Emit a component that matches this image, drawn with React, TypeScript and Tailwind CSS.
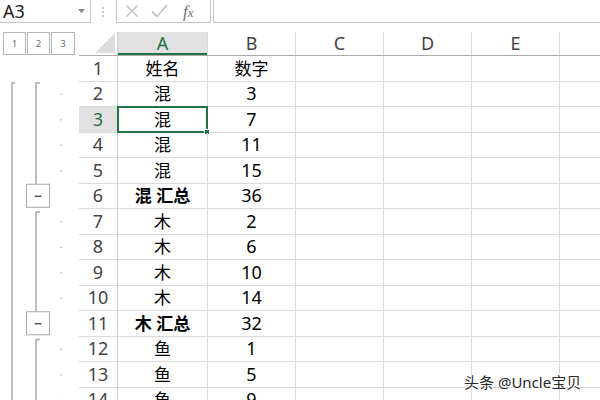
import React from "react";

type Row = { n: number; a: string; b: string; bold?: boolean; level?: "detail" | "total" | "head" };

const rows: Row[] = [
  { n: 1, a: "姓名", b: "数字", level: "head" },
  { n: 2, a: "混", b: "3", level: "detail" },
  { n: 3, a: "混", b: "7", level: "detail" },
  { n: 4, a: "混", b: "11", level: "detail" },
  { n: 5, a: "混", b: "15", level: "detail" },
  { n: 6, a: "混 汇总", b: "36", bold: true, level: "total" },
  { n: 7, a: "木", b: "2", level: "detail" },
  { n: 8, a: "木", b: "6", level: "detail" },
  { n: 9, a: "木", b: "10", level: "detail" },
  { n: 10, a: "木", b: "14", level: "detail" },
  { n: 11, a: "木 汇总", b: "32", bold: true, level: "total" },
  { n: 12, a: "鱼", b: "1", level: "detail" },
  { n: 13, a: "鱼", b: "5", level: "detail" },
  { n: 14, a: "鱼", b: "9", level: "detail" },
];

const RH = 25.5;
const cjk = { fontFamily: '"Noto Sans", "Noto Sans CJK SC", sans-serif' };

function OutlineGutter() {
  const stroke = "#a8a8a8";
  const center = (n: number) => (n - 1) * RH + RH / 2;
  const top = (n: number) => (n - 1) * RH;
  return (
    <svg width="79" height="350" className="block">
      {/* level 1 bracket */}
      <path d={`M15 ${top(2) + 1.5} H12 V350`} stroke={stroke} strokeWidth="1.5" fill="none" />
      {/* level 2 brackets */}
      <path d={`M40 ${top(2) + 1.5} H36 V${center(6) - 12}`} stroke={stroke} strokeWidth="1.5" fill="none" />
      <path d={`M40 ${top(7) + 3} H36 V${center(11) - 12}`} stroke={stroke} strokeWidth="1.5" fill="none" />
      <path d={`M40 ${top(12) + 3} H36 V350`} stroke={stroke} strokeWidth="1.5" fill="none" />
      {[6, 11].map((n) => (
        <g key={n}>
          <rect x="26.5" y={center(n) - 12} width="23" height="23" fill="#fff" stroke="#a8a8a8" />
          <line x1="34.5" x2="41.5" y1={center(n)} y2={center(n)} stroke="#333" strokeWidth="1.2" />
        </g>
      ))}
      {rows
        .filter((r) => r.level === "detail")
        .map((r) => (
          <rect key={r.n} x="60.5" y={center(r.n) - 0.5} width="1.2" height="1.2" fill="#9a9a9a" />
        ))}
    </svg>
  );
}

export default function App() {
  const cols = [
    { k: "A", w: "w-[90px]" },
    { k: "B", w: "w-[88px]" },
    { k: "C", w: "w-[88px]" },
    { k: "D", w: "w-[88px]" },
    { k: "E", w: "w-[88px]" },
  ];

  return (
    <div className="relative w-[600px] h-[400px] overflow-hidden bg-white text-black" style={cjk}>
      {/* formula bar */}
      <div className="flex h-[23px]">
        <div className="relative w-[91px] border-r border-b border-[#c6c6c6] flex items-center pl-[3px]">
          <span className="text-[18px] leading-none text-[#222]" style={{ fontFamily: '"Noto Sans", sans-serif' }}>A3</span>
          <svg width="7" height="4" className="absolute left-[78px] top-[9px]">
            <path d="M0 0 H7 L3.5 4 Z" fill="#8a8a8a" />
          </svg>
        </div>
        <div className="w-[25px] flex flex-col items-center justify-center gap-[2px] pr-[1px]">
          <span className="w-[2px] h-[2px] bg-[#c8c8c8]" />
          <span className="w-[2px] h-[2px] bg-[#c8c8c8]" />
          <span className="w-[2px] h-[2px] bg-[#c8c8c8]" />
        </div>
        <div className="w-[95px] border-l border-r border-b border-[#c6c6c6] flex items-center pl-[8px] gap-[12px]">
          <svg width="14" height="14" viewBox="0 0 14 14">
            <path d="M1.5 1.5 L12.5 12.5 M12.5 1.5 L1.5 12.5" stroke="#c4c4c4" strokeWidth="1.6" />
          </svg>
          <svg width="17" height="14" viewBox="0 0 17 14">
            <path d="M1 7.5 L6 12.5 L16 1" stroke="#c4c4c4" strokeWidth="1.8" fill="none" />
          </svg>
          <span
            className="ml-[3px] text-[17px] italic leading-none text-[#707070]"
            style={{ fontFamily: '"Liberation Serif", serif' }}
          >
            f<span className="text-[13px]">x</span>
          </span>
        </div>
        <div className="ml-[2px] flex-1 border-l border-b border-[#c6c6c6]" />
      </div>

      <div className="mt-[9px] flex">
        {/* outline gutter */}
        <div className="w-[79px] shrink-0">
          <div className="h-[24px] flex items-start gap-[1px] pl-[3px]">
            {["1", "2", "3"].map((l, i) => (
              <div
                key={l}
                className={`h-[23px] ${i === 2 ? "w-[24px]" : "w-[23px]"} border border-[#b4b4b4] flex items-center justify-center text-[9px] text-[#666]`}
              >
                {l}
              </div>
            ))}
          </div>
          <OutlineGutter />
        </div>

        {/* sheet */}
        <div className="flex-1">
          <div className="flex h-[24px] border-b border-[#ababab]">
            <div className="w-[39px] shrink-0 border-r border-[#d0d0d0] relative">
              <svg width="20" height="20" className="absolute right-[2px] bottom-[2px]">
                <path d="M20 0 V20 H0 Z" fill="#dcdcdc" />
              </svg>
            </div>
            {cols.map((c) => (
              <div
                key={c.k}
                className={`${c.w} shrink-0 flex items-center justify-center text-[18px] border-r border-[#dadada] ${
                  c.k === "A" ? "bg-[#e1e1e1] text-[#217346] shadow-[inset_0_-2px_0_#217346]" : "text-[#444]"
                }`}
              >
                {c.k}
              </div>
            ))}
            <div className="flex-1" />
          </div>

          {rows.map((r) => (
            <div key={r.n} className="flex" style={{ height: RH }}>
              <div
                className={`w-[39px] shrink-0 border-r border-b border-r-[#c8c8c8] border-b-[#dadada] flex items-center justify-center text-[18px] ${
                  r.n === 3 ? "bg-[#e1e1e1] text-[#217346]" : "text-[#444]"
                }`}
              >
                {r.n}
              </div>
              <div
                className={`relative w-[90px] shrink-0 border-r border-b border-[#dadada] flex items-center justify-center text-[17px] ${
                  r.bold ? "font-bold" : ""
                }`}
              >
                {r.a}
                {r.n === 3 && (
                  <div className="absolute -left-[1px] -top-[1px] -right-[1px] -bottom-[1px] border-2 border-[#217346]">
                    <div className="absolute -right-[4px] -bottom-[4px] w-[6px] h-[6px] bg-[#217346] border border-white" />
                  </div>
                )}
              </div>
              <div
                className={`w-[88px] shrink-0 border-r border-b border-[#dadada] flex items-center justify-center ${
                  r.n === 1 ? "text-[17px]" : "text-[18px]"
                }`}
              >
                {r.b}
              </div>
              {["C", "D", "E"].map((k) => (
                <div key={k} className="w-[88px] shrink-0 border-r border-b border-[#dadada]" />
              ))}
              <div className="flex-1 border-b border-[#dadada]" />
            </div>
          ))}
        </div>
      </div>

      <div
        className="absolute left-[464px] top-[371px] text-[15px] text-[#2a2a2a]"
        style={{ ...cjk, textShadow: "0 0 2px #fff, 0 0 2px #fff" }}
      >
        头条 @Uncle宝贝
      </div>
    </div>
  );
}
